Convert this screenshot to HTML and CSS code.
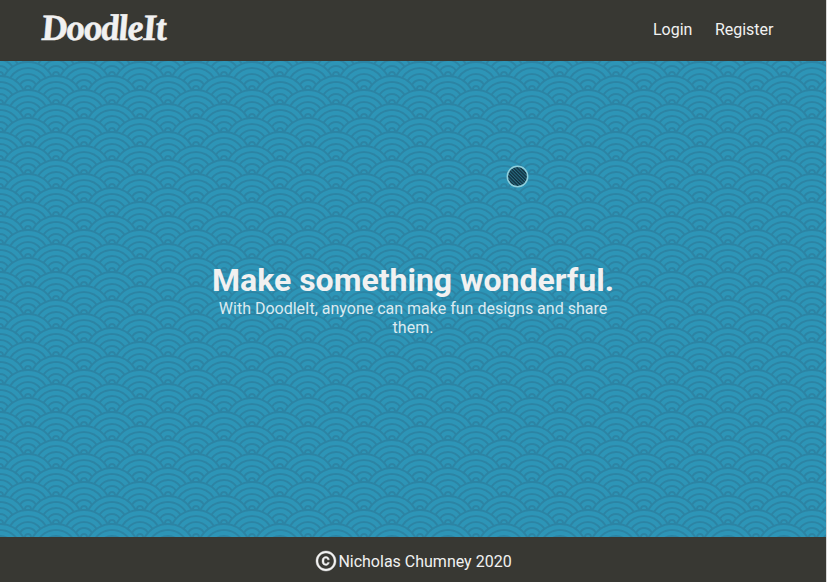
FILE: index.html
```html
<!DOCTYPE html>
<html lang="en">
<head>
<meta charset="utf-8">
<title>DoodleIt</title>
<link rel="stylesheet" href="styles.css">
</head>
<body>
<div class="page">
  <header class="header">
    <a class="logo">DoodleIt</a>
    <nav class="nav"><a>Login</a><a>Register</a></nav>
  </header>
  <main class="hero">
    <h1 class="title">Make something wonderful.</h1>
    <p class="lead">With DoodleIt, anyone can make fun designs and share them.</p>
    <svg class="brush" viewBox="0 0 24 24">
      <defs>
        <pattern id="hatch" width="2.4" height="2.4" patternUnits="userSpaceOnUse" patternTransform="rotate(-45)">
          <rect width="2.4" height="2.4" fill="#12303f"/>
          <rect width="1" height="2.4" fill="#286f85"/>
        </pattern>
      </defs>
      <circle cx="12.5" cy="11.5" r="10" fill="url(#hatch)"/>
      <circle cx="12.5" cy="11.5" r="10.2" fill="none" stroke="#8fcfdc" stroke-width="1.5"/>
    </svg>
  </main>
  <footer class="footer">
    <svg class="copyright" viewBox="0 0 24 24"><path fill="currentColor" stroke="currentColor" stroke-width=".4" d="M10.080 10.860c.05-.33.16-.62.3-.87s.34-.46.59-.62c.24-.15.54-.22.91-.23.23.01.44.05.63.13.2.09.38.21.52.36s.25.33.34.53.13.42.14.64h1.790c-.02-.47-.11-.9-.28-1.290s-.4-.73-.7-1.010-.66-.5-1.080-.66-.88-.23-1.390-.23c-.65 0-1.220.11-1.700.34s-.88.530-1.200.92-.56.840-.71 1.360S8 11.290 8 11.870v.27c0 .58.080 1.120.23 1.640s.39.970.71 1.350.72.690 1.200.910 1.050.340 1.700.340c.47 0 .910-.080 1.320-.23s.770-.36 1.080-.63.560-.58.740-.940.290-.740.300-1.150h-1.790c-.010.210-.060.400-.150.580s-.21.330-.36.460-.32.230-.52.300c-.19.070-.39.090-.6.100-.36-.010-.66-.080-.89-.23-.25-.160-.45-.370-.590-.620s-.25-.550-.3-.880-.080-.670-.080-1v-.27c0-.35.030-.68.080-1.010zM12 2C6.480 2 2 6.480 2 12s4.480 10 10 10 10-4.480 10-10S17.520 2 12 2zm0 18c-4.410 0-8-3.590-8-8s3.590-8 8-8 8 3.590 8 8-3.590 8-8 8z"/></svg>
    <span>Nicholas Chumney 2020</span>
  </footer>
</div>
</body>
</html>
```
FILE: styles.css
```css
* { box-sizing: border-box; }
body { margin: 0; background: #d8d8d8; font: 16px/19px Roboto, sans-serif; color: #f1f1f1; }
.page { display: flex; flex-direction: column; width: calc(100% - 1px); height: 100vh; }
.header { display: flex; align-items: center; justify-content: space-between; height: 61px; padding: 0 52.5px 0 41px; background: #383833; }
.logo {
  padding-bottom: 5px; font: italic bold 37px/50px "Liberation Serif", serif; letter-spacing: -1.2px;
  -webkit-text-stroke: 0.5px currentColor; transform: skewX(5deg);
}
.nav { display: flex; gap: 22.5px; padding-bottom: 2px; }
.hero {
  position: relative; flex: 1; display: flex; flex-direction: column; align-items: center; justify-content: center;
  text-align: center; background-color: #2d95b7;
  background-image: url("data:image/svg+xml,%3Csvg xmlns='http://www.w3.org/2000/svg' width='56' height='28' viewBox='0 0 56 28'%3E%3Cpath fill='%232a4259' fill-opacity='0.2' d='M56 26v2h-7.75c2.3-1.27 4.94-2 7.75-2zm-26 2a2 2 0 1 0-4 0h-4.09A25.98 25.98 0 0 0 0 16v-2c.67 0 1.34.02 2 .07V14a2 2 0 0 0-2-2v-2a4 4 0 0 1 3.98 3.6 28.09 28.09 0 0 1 2.8-3.86A8 8 0 0 0 0 6V4a9.99 9.99 0 0 1 8.17 4.23c.94-.95 1.96-1.83 3.03-2.63A13.98 13.98 0 0 0 0 0h7.75c2 1.1 3.73 2.63 5.1 4.45 1.12-.72 2.3-1.37 3.53-1.93A20.1 20.1 0 0 0 14.28 0h2.7c.45.56.88 1.14 1.29 1.74 1.3-.48 2.63-.87 4-1.15-.11-.2-.23-.4-.36-.59H26v.07a28.4 28.4 0 0 1 4 0V0h4.09l-.37.59c1.38.28 2.72.67 4.01 1.15.4-.6.84-1.18 1.3-1.74h2.69a20.1 20.1 0 0 0-2.1 2.52c1.23.56 2.41 1.2 3.54 1.93A16.08 16.08 0 0 1 48.25 0H56c-4.58 0-8.65 2.2-11.2 5.6 1.07.8 2.09 1.68 3.03 2.63A9.99 9.99 0 0 1 56 4v2a8 8 0 0 0-6.77 3.74c1.03 1.2 1.97 2.5 2.79 3.86A4 4 0 0 1 56 10v2a2 2 0 0 0-2 2.07 28.4 28.4 0 0 1 2-.07v2c-9.2 0-17.3 4.78-21.91 12H30zM7.75 28H0v-2c2.81 0 5.46.73 7.75 2zM56 20v2c-5.6 0-10.65 2.3-14.28 6h-2.7c4.04-4.89 10.15-8 16.98-8zm-39.03 8h-2.69C10.65 24.3 5.6 22 0 22v-2c6.83 0 12.94 3.11 16.97 8zm15.01-.4a28.09 28.09 0 0 1 2.8-3.86 8 8 0 0 0-13.55 0c1.03 1.2 1.97 2.5 2.79 3.86a4 4 0 0 1 7.96 0zm14.29-11.86c1.3-.48 2.63-.87 4-1.15a25.99 25.99 0 0 0-44.55 0c1.38.28 2.72.67 4.01 1.15a21.98 21.98 0 0 1 36.54 0zm-5.43 2.71c1.13-.72 2.3-1.37 3.54-1.93a19.98 19.98 0 0 0-32.76 0c1.23.56 2.41 1.2 3.54 1.93a15.98 15.98 0 0 1 25.68 0zm-4.67 3.78c.94-.95 1.96-1.83 3.03-2.63a13.98 13.98 0 0 0-22.4 0c1.07.8 2.09 1.68 3.03 2.63a9.99 9.99 0 0 1 16.34 0z'/%3E%3C/svg%3E");
}
.title { margin: 0; font-size: 32px; line-height: 38px; font-weight: 700; white-space: nowrap; }
.lead { margin: 0; width: 413px; color: #dbeaf0; }
.brush { position: absolute; left: 505px; top: 104px; width: 24px; height: 24px; }
.footer { display: flex; align-items: center; justify-content: center; height: 45px; padding: 4px 0 1px; background: #383833; }
.copyright { width: 24px; height: 24px; }
```
